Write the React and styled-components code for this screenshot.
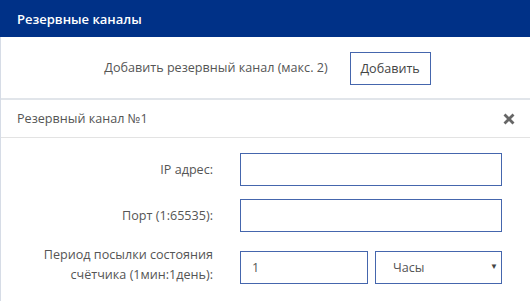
import React, { useState } from 'react';
import styled, { createGlobalStyle } from 'styled-components';

const GlobalStyle = createGlobalStyle`
  html, body {
    margin: 0;
    padding: 0;
    background: #fff;
  }
  body {
    font-family: "Open Sans", "Noto Sans", sans-serif;
    color: #555;
  }
`;

const App = () => {
  const [ip, setIp] = useState('');
  const [port, setPort] = useState('');
  const [period, setPeriod] = useState('1');
  const [unit, setUnit] = useState('hours');

  return (
    <Wrapper>
      <GlobalStyle />
      <Header>Резервные каналы</Header>
      <Body>
        <AddRow>
          <AddText>Добавить резервный канал (макс. 2)</AddText>
          <Button type="button">Добавить</Button>
        </AddRow>
        <ChannelHeader>
          <ChannelTitle>Резервный канал №1</ChannelTitle>
          <Close type="button" aria-label="Удалить">
            <svg width="12" height="12" viewBox="0 0 12 12">
              <path d="M1.5 1.5 L10.5 10.5 M10.5 1.5 L1.5 10.5" stroke="#666" strokeWidth="2.8" strokeLinecap="butt" />
            </svg>
          </Close>
        </ChannelHeader>
        <Form>
          <Label htmlFor="ip">IP адрес:</Label>
          <Input id="ip" value={ip} onChange={e => setIp(e.target.value)} />

          <Label htmlFor="port">Порт (1:65535):</Label>
          <Input id="port" value={port} onChange={e => setPort(e.target.value)} />

          <Label htmlFor="period">Период посылки состояния<br />счётчика (1мин:1день):</Label>
          <Split>
            <Input id="period" value={period} onChange={e => setPeriod(e.target.value)} />
            <SelectBox>
              <Select value={unit} onChange={e => setUnit(e.target.value)}>
                <option value="minutes">Минуты</option>
                <option value="hours">Часы</option>
                <option value="days">Дни</option>
              </Select>
              <Arrow>▼</Arrow>
            </SelectBox>
          </Split>
        </Form>
      </Body>
    </Wrapper>
  );
};

export default App;

const Wrapper = styled.div`
  width: 530px;
  height: 301px;
  overflow: hidden;
`

const Header = styled.div`
  height: 37px;
  background: #003187;
  color: #fff;
  font-size: 13px;
  font-weight: 600;
  display: flex;
  align-items: center;
  padding-left: 17px;
  box-sizing: border-box;
`

const Body = styled.div`
  border-left: 1px solid #d6dce6;
  height: 264px;
  box-sizing: border-box;
`

const AddRow = styled.div`
  height: 61px;
  display: flex;
  align-items: center;
  justify-content: center;
  gap: 22px;
  border-bottom: 2px solid #e1e5ea;
  padding-left: 4px;
`

const AddText = styled.span`
  font-size: 12.6px;
  color: #555;
`

const Button = styled.button`
  font-family: inherit;
  font-size: 12.6px;
  color: #444;
  background: #fff;
  border: 1px solid #4566ad;
  width: 81px;
  height: 33px;
  padding: 0;
  margin-top: 1px;
`

const ChannelHeader = styled.div`
  height: 37px;
  display: flex;
  align-items: center;
  justify-content: space-between;
  padding: 0 15px 0 16px;
  border-bottom: 1px solid #e3e3e3;
`

const ChannelTitle = styled.span`
  font-size: 12.6px;
  color: #555;
`

const Close = styled.button`
  border: 0;
  background: none;
  padding: 0;
  width: 12px;
  height: 12px;
  display: flex;
`

const Form = styled.div`
  display: grid;
  grid-template-columns: 212px 262px;
  column-gap: 27px;
  row-gap: 13px;
  align-items: center;
  padding-top: 15px;
`

const Label = styled.label`
  text-align: right;
  font-size: 12.6px;
  line-height: 20px;
  color: #555;
`

const Input = styled.input`
  height: 33px;
  box-sizing: border-box;
  border: 1px solid #4566ad;
  font-family: inherit;
  font-size: 12.6px;
  color: #555;
  padding: 0 11px;
  width: 100%;
  outline: none;
`

const Split = styled.div`
  display: grid;
  grid-template-columns: 128px 127px;
  column-gap: 7px;
  margin-top: 4px;
`

const SelectBox = styled.div`
  position: relative;
`

const Select = styled.select`
  appearance: none;
  width: 100%;
  height: 33px;
  box-sizing: border-box;
  border: 1px solid #4566ad;
  background: #fff;
  font-family: inherit;
  font-size: 12.6px;
  color: #555;
  padding: 0 0 0 17px;
  border-radius: 0;
  outline: none;
`

const Arrow = styled.span`
  position: absolute;
  right: 4px;
  top: 9px;
  font-size: 8px;
  color: #444;
  pointer-events: none;
`
